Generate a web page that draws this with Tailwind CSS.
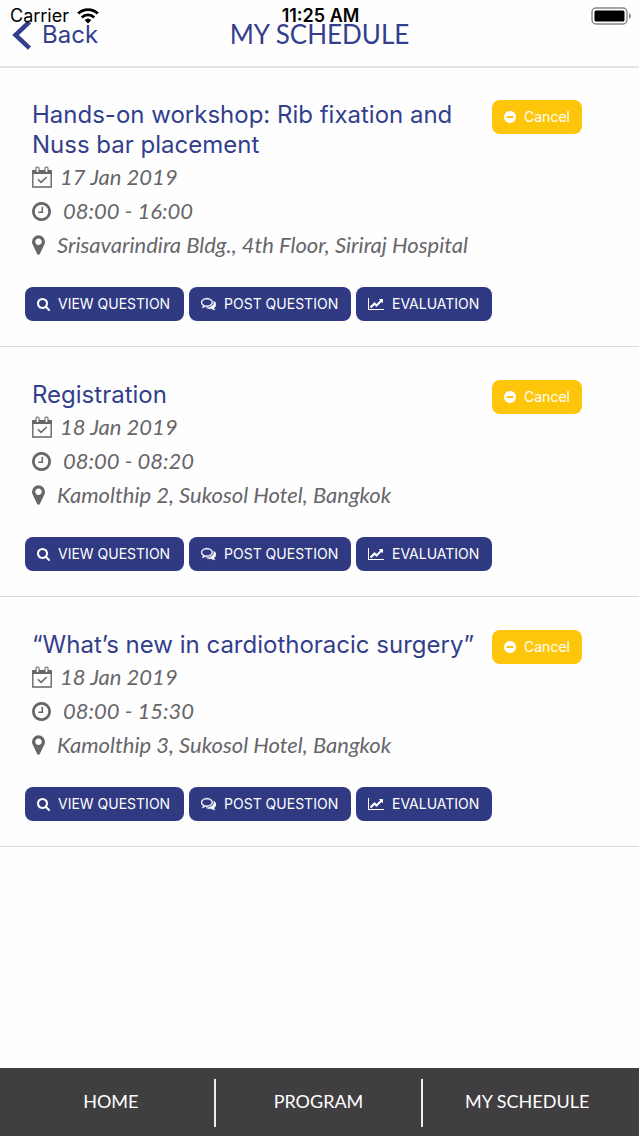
<!DOCTYPE html>
<html lang="en">
<head>
    <meta charset="UTF-8">
    <meta name="viewport" content="width=device-width, initial-scale=1.0">
    <title>My Schedule</title>
    <script src="https://cdn.jsdelivr.net/npm/@tailwindcss/browser@4"></script>
</head>
<body class="min-h-screen flex flex-col bg-[#fefefe] font-['Inter',sans-serif] text-[#333e8c]">

<!-- Shared icons -->
<svg class="hidden">
    <symbol id="calendar" viewBox="0 0 20 22">
        <path fill="none" stroke="currentColor" stroke-width="1.4" d="M.8 5h18.4v16H.8z"/>
        <path d="M.5 4h19v4H.5z"/>
        <rect x="4" y="1" width="3" height="5.5" rx="1.2" fill="#fefefe" stroke="currentColor" stroke-width="1.1"/>
        <rect x="13" y="1" width="3" height="5.5" rx="1.2" fill="#fefefe" stroke="currentColor" stroke-width="1.1"/>
        <path fill="none" stroke="currentColor" stroke-width="1.5" d="M5.8 13.2l3.3 3.2 5.6-5.4"/>
    </symbol>
    <symbol id="clock" viewBox="128 128 1536 1536">
        <path d="M1024 544v448q0 14-9 23t-23 9h-320q-14 0-23-9t-9-23v-64q0-14 9-23t23-9h224v-352q0-14 9-23t23-9h64q14 0 23 9t9 23zm416 352q0-148-73-273t-198-198-273-73-273 73-198 198-73 273 73 273 198 198 273 73 273-73 198-198 73-273zm224 0q0 209-103 385.5t-279.5 279.5-385.5 103-385.5-103-279.5-279.5-103-385.5 103-385.5 279.5-279.5 385.5-103 385.5 103 279.5 279.5 103 385.5z"/>
    </symbol>
    <symbol id="marker" viewBox="384 128 1024 1536">
        <path d="M1152 640q0-106-75-181t-181-75-181 75-75 181 75 181 181 75 181-75 75-181zm256 0q0 109-33 179l-364 774q-16 33-47.5 52t-67.5 19-67.5-19-46.5-52l-365-774q-33-70-33-179 0-212 150-362t362-150 362 150 150 362z"/>
    </symbol>
    <symbol id="minus" viewBox="128 128 1536 1536">
        <path d="M1344 960v-128q0-26-19-45t-45-19h-768q-26 0-45 19t-19 45v128q0 26 19 45t45 19h768q26 0 45-19t19-45zm320-64q0 209-103 385.5t-279.5 279.5-385.5 103-385.5-103-279.5-279.5-103-385.5 103-385.5 279.5-279.5 385.5-103 385.5 103 279.5 279.5 103 385.5z"/>
    </symbol>
    <symbol id="search" viewBox="64 128 1664 1664">
        <path d="M1216 832q0-185-131.5-316.5t-316.5-131.5-316.5 131.5-131.5 316.5 131.5 316.5 316.5 131.5 316.5-131.5 131.5-316.5zm512 832q0 52-38 90t-90 38q-54 0-90-38l-343-342q-179 124-399 124-143 0-273.5-55.5t-225-150-150-225-55.5-273.5 55.5-273.5 150-225 225-150 273.5-55.5 273.5 55.5 225 150 150 225 55.5 273.5q0 220-124 399l343 343q37 37 37 90z"/>
    </symbol>
    <symbol id="comments" viewBox="0 128 1792 1664">
        <path stroke="currentColor" stroke-width="40" d="M704 384q-153 0-286 52t-211.5 141-78.5 191q0 82 53 158t149 132l97 56-35 84q34-20 62-39l44-31 53 10q78 14 153 14 153 0 286-52t211.5-141 78.5-191-78.5-191-211.5-141-286-52zm0-128q191 0 353.5 68.5t256.5 186.5 94 257-94 257-256.5 186.5-353.5 68.5q-86 0-176-16-124 88-278 128-36 9-86 16h-3q-11 0-20.5-8t-11.5-21q-1-3-1-6.5t.5-6.5 2-6l2.5-5 3.5-5.5 4-5 4.5-5 4-4.5q5-6 23-25t26-29.5 22.5-29 25-38.5 20.5-44q-124-72-195-177t-71-224q0-139 94-257t256.5-186.5 353.5-68.5zm822 1169q10 24 20.5 44t25 38.5 22.5 29 26 29.5 23 25q1 1 4 4.5t4.5 5 4 5 3.5 5.5l2.5 5 2 6 .5 6.5-1 6.5q-3 14-13 22t-22 7q-50-7-86-16-154-40-278-128-90 16-176 16-271 0-472-132 58 4 88 4 161 0 309-45t264-129q125-92 192-212t67-254q0-77-23-152 129 71 204 178t75 230q0 120-71 224.5t-195 176.5z"/>
    </symbol>
    <symbol id="chart" viewBox="0 128 2048 1536">
        <path d="M2048 1536v128h-2048v-1536h128v1408h1920zm-128-1248v435q0 21-19.5 29.5t-35.5-7.5l-121-121-633 633q-10 10-23 10t-23-10l-233-233-416 416-192-192 585-585q10-10 23-10t23 10l233 233 464-464-121-121q-16-16-7.5-35.5t29.5-19.5h435q14 0 23 9t9 23z"/>
    </symbol>
</svg>

<!-- Status bar, drawn over the header -->
<div class="absolute inset-x-0 top-0 z-10 h-8 pl-[10px] pr-2 grid grid-cols-[1fr_auto_1fr] items-center text-black text-lg pointer-events-none">
    <div class="flex items-center gap-2">
        <span>Carrier</span>
        <svg class="w-[22px] h-4" viewBox="0 0 22 16" fill="none" stroke="currentColor" stroke-width="2.8">
            <path d="M1.2 5.6a14 14 0 0 1 19.6 0"/>
            <path d="M4.8 9.4a9 9 0 0 1 12.4 0"/>
            <path fill="currentColor" stroke="none" d="M11 15.6l-3.4-3.5a5 5 0 0 1 6.8 0z"/>
        </svg>
    </div>
    <span class="font-semibold">11:25 AM</span>
    <svg class="w-10 h-[18px] justify-self-end" viewBox="0 0 40 18">
        <rect x="1" y="1" width="35" height="16" rx="4" fill="none" stroke="#888" stroke-width="1.4"/>
        <rect x="3.5" y="3.5" width="30" height="11" rx="1.5"/>
        <path d="M38 6v6q2-1 2-3t-2-3z" fill="#888"/>
    </svg>
</div>

<header class="h-[68px] pt-[3px] border-b-2 border-[#e4e2e6] px-3 grid grid-cols-[1fr_auto_1fr] items-center">
    <a href="#" class="flex items-center gap-[10px] text-2xl">
        <svg class="w-5 h-[30px]" viewBox="0 0 20 30" fill="none" stroke="currentColor" stroke-width="4.5">
            <path d="M17.5 1.8L3.5 15l14 13.2"/>
        </svg>
        Back
    </a>
    <h1 class="font-['Lato',sans-serif] text-[26px]">MY SCHEDULE</h1>
</header>

<main class="flex-1">
    <article class="pt-8 pb-[25px] border-b border-[#dcdadd]">
        <div class="flex items-start pl-8 pr-[57px]">
            <h2 class="flex-1 text-2xl leading-[30px]">Hands-on workshop: Rib fixation and Nuss bar placement</h2>
            <button class="w-[90px] h-[34px] -mb-1 rounded-lg bg-[#fec60b] text-white text-sm flex items-center justify-center gap-2">
                <svg class="size-3" fill="currentColor"><use href="#minus"/></svg>Cancel
            </button>
        </div>
        <div class="pl-8 font-['Lato',sans-serif] italic text-[22px] leading-[34px] text-[#67666a]">
            <p class="flex items-center gap-2"><svg class="w-5 h-[22px]" fill="currentColor"><use href="#calendar"/></svg>17 Jan 2019</p>
            <p class="flex items-center gap-3"><svg class="size-[19px]" fill="currentColor"><use href="#clock"/></svg>08:00 - 16:00</p>
            <p class="flex items-center gap-3"><svg class="w-[13px] h-5" fill="currentColor"><use href="#marker"/></svg>Srisavarindira Bldg., 4th Floor, Siriraj Hospital</p>
        </div>
        <div class="mt-[25px] pl-[25px] flex gap-[5px] text-sm text-white">
            <button class="w-[159px] h-[34px] pl-3 rounded-lg bg-[#303a82] flex items-center gap-2"><svg class="size-[13px]" fill="currentColor"><use href="#search"/></svg>VIEW QUESTION</button>
            <button class="w-[162px] h-[34px] pl-3 rounded-lg bg-[#303a82] flex items-center gap-2"><svg class="w-[15px] h-[14px]" fill="currentColor"><use href="#comments"/></svg>POST QUESTION</button>
            <button class="w-[136px] h-[34px] pl-3 rounded-lg bg-[#303a82] flex items-center gap-2"><svg class="w-4 h-3" fill="currentColor"><use href="#chart"/></svg>EVALUATION</button>
        </div>
    </article>

    <article class="pt-[33px] pb-[25px] border-b border-[#dcdadd]">
        <div class="flex items-start pl-8 pr-[57px]">
            <h2 class="flex-1 text-2xl leading-[30px]">Registration</h2>
            <button class="w-[90px] h-[34px] -mb-1 rounded-lg bg-[#fec60b] text-white text-sm flex items-center justify-center gap-2">
                <svg class="size-3" fill="currentColor"><use href="#minus"/></svg>Cancel
            </button>
        </div>
        <div class="pl-8 font-['Lato',sans-serif] italic text-[22px] leading-[34px] text-[#67666a]">
            <p class="flex items-center gap-2"><svg class="w-5 h-[22px]" fill="currentColor"><use href="#calendar"/></svg>18 Jan 2019</p>
            <p class="flex items-center gap-3"><svg class="size-[19px]" fill="currentColor"><use href="#clock"/></svg>08:00 - 08:20</p>
            <p class="flex items-center gap-3"><svg class="w-[13px] h-5" fill="currentColor"><use href="#marker"/></svg>Kamolthip 2, Sukosol Hotel, Bangkok</p>
        </div>
        <div class="mt-[25px] pl-[25px] flex gap-[5px] text-sm text-white">
            <button class="w-[159px] h-[34px] pl-3 rounded-lg bg-[#303a82] flex items-center gap-2"><svg class="size-[13px]" fill="currentColor"><use href="#search"/></svg>VIEW QUESTION</button>
            <button class="w-[162px] h-[34px] pl-3 rounded-lg bg-[#303a82] flex items-center gap-2"><svg class="w-[15px] h-[14px]" fill="currentColor"><use href="#comments"/></svg>POST QUESTION</button>
            <button class="w-[136px] h-[34px] pl-3 rounded-lg bg-[#303a82] flex items-center gap-2"><svg class="w-4 h-3" fill="currentColor"><use href="#chart"/></svg>EVALUATION</button>
        </div>
    </article>

    <article class="pt-[33px] pb-[25px] border-b border-[#dcdadd]">
        <div class="flex items-start pl-8 pr-[57px]">
            <h2 class="flex-1 text-2xl leading-[30px]">“What’s new in cardiothoracic surgery”</h2>
            <button class="w-[90px] h-[34px] -mb-1 rounded-lg bg-[#fec60b] text-white text-sm flex items-center justify-center gap-2">
                <svg class="size-3" fill="currentColor"><use href="#minus"/></svg>Cancel
            </button>
        </div>
        <div class="pl-8 font-['Lato',sans-serif] italic text-[22px] leading-[34px] text-[#67666a]">
            <p class="flex items-center gap-2"><svg class="w-5 h-[22px]" fill="currentColor"><use href="#calendar"/></svg>18 Jan 2019</p>
            <p class="flex items-center gap-3"><svg class="size-[19px]" fill="currentColor"><use href="#clock"/></svg>08:00 - 15:30</p>
            <p class="flex items-center gap-3"><svg class="w-[13px] h-5" fill="currentColor"><use href="#marker"/></svg>Kamolthip 3, Sukosol Hotel, Bangkok</p>
        </div>
        <div class="mt-[25px] pl-[25px] flex gap-[5px] text-sm text-white">
            <button class="w-[159px] h-[34px] pl-3 rounded-lg bg-[#303a82] flex items-center gap-2"><svg class="size-[13px]" fill="currentColor"><use href="#search"/></svg>VIEW QUESTION</button>
            <button class="w-[162px] h-[34px] pl-3 rounded-lg bg-[#303a82] flex items-center gap-2"><svg class="w-[15px] h-[14px]" fill="currentColor"><use href="#comments"/></svg>POST QUESTION</button>
            <button class="w-[136px] h-[34px] pl-3 rounded-lg bg-[#303a82] flex items-center gap-2"><svg class="w-4 h-3" fill="currentColor"><use href="#chart"/></svg>EVALUATION</button>
        </div>
    </article>
</main>

<!-- Bottom tabs -->
<nav class="h-[68px] pt-px px-2 grid grid-cols-3 items-center bg-[#413e41] text-white font-['Lato',sans-serif] text-lg">
    <a href="#" class="h-12 pb-1 flex items-center justify-center border-r-2 border-[#eee]">HOME</a>
    <a href="#" class="h-12 pb-1 flex items-center justify-center border-r-2 border-[#eee]">PROGRAM</a>
    <a href="#" class="h-12 pb-1 flex items-center justify-center">MY SCHEDULE</a>
</nav>
</body>
</html>
